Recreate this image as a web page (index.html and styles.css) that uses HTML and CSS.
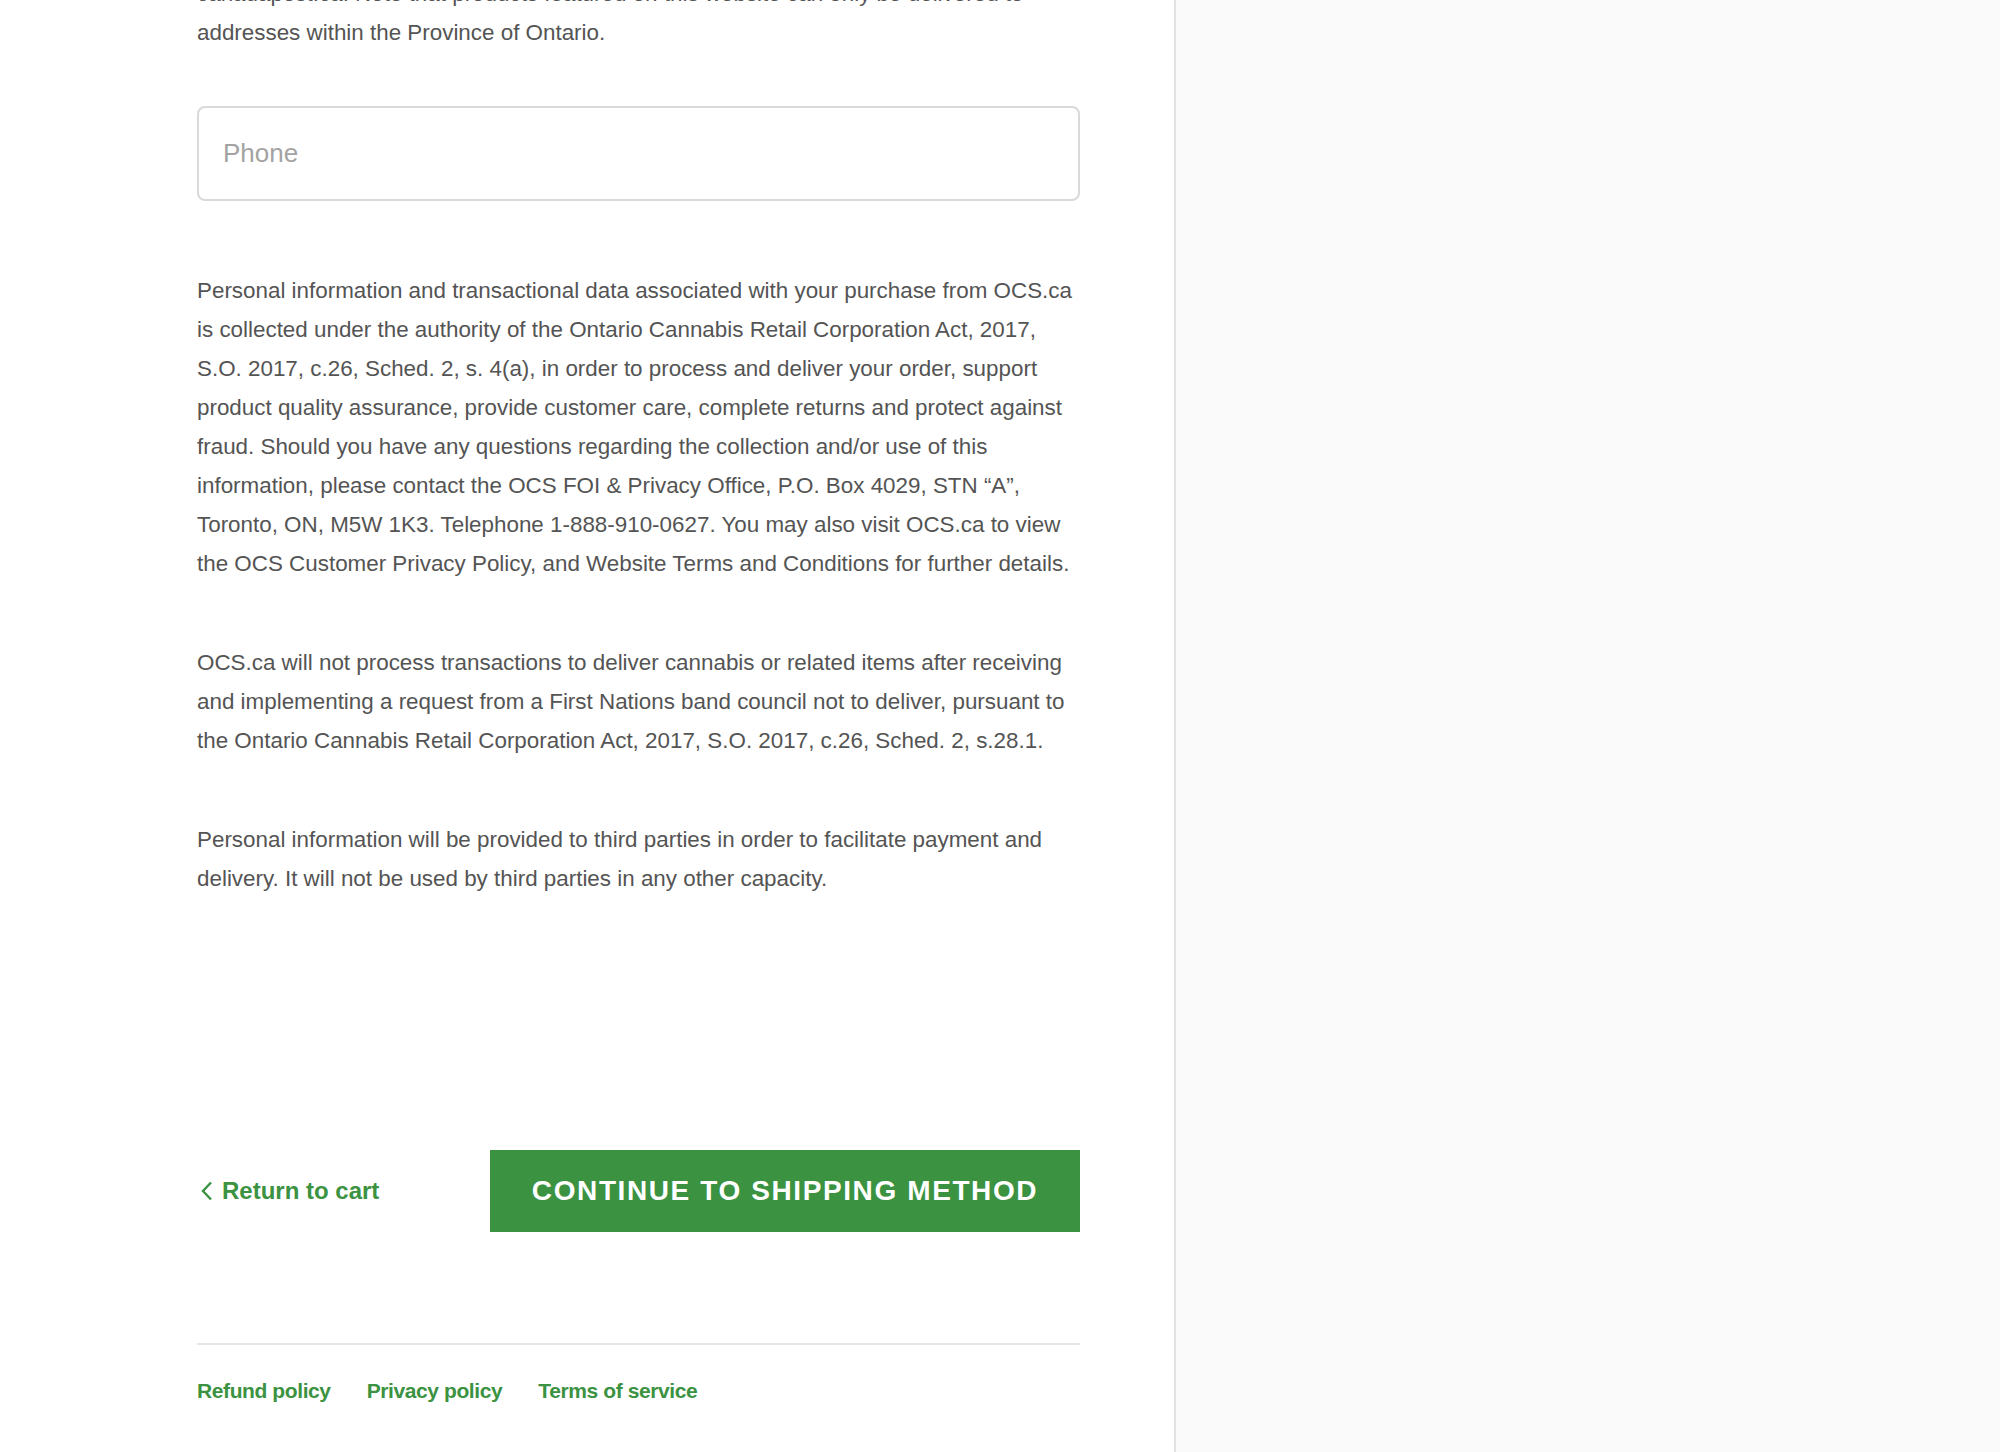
FILE: index.html
```html
<!DOCTYPE html>
<html lang="en">
<head>
<meta charset="utf-8">
<title>Checkout - Contact information</title>
<link rel="stylesheet" href="styles.css">
</head>
<body>
<div class="page">
  <main class="main">
    <div class="content">
      <p class="text intro">canadapost.ca. Note that products featured on this website can only be delivered to addresses within the Province of Ontario.</p>

      <div class="field">
        <input class="input" type="tel" placeholder="Phone">
      </div>

      <p class="text p1">Personal information and transactional data associated with your purchase from OCS.ca is collected under the authority of the Ontario Cannabis Retail Corporation Act, 2017, S.O. 2017, c.26, Sched. 2, s. 4(a), in order to process and deliver your order, support product quality assurance, provide customer care, complete returns and protect against fraud. Should you have any questions regarding the collection and/or use of this information, please contact the OCS FOI &amp; Privacy Office, P.O. Box 4029, STN “A”, Toronto, ON, M5W 1K3. Telephone 1-888-910-0627. You may also visit OCS.ca to view the OCS Customer Privacy Policy, and Website Terms and Conditions for further details.</p>

      <p class="text p2">OCS.ca will not process transactions to deliver cannabis or related items after receiving and implementing a request from a First Nations band council not to deliver, pursuant to the Ontario Cannabis Retail Corporation Act, 2017, S.O. 2017, c.26, Sched. 2, s.28.1.</p>

      <p class="text p3">Personal information will be provided to third parties in order to facilitate payment and delivery. It will not be used by third parties in any other capacity.</p>

      <div class="actions">
        <a class="back" href="#">
          <svg class="chev" width="13" height="20" viewBox="0 0 13 20" aria-hidden="true"><path d="M11 1.5 L3 10 L11 18.5" fill="none" stroke="currentColor" stroke-width="2.4"/></svg>
          <span>Return to cart</span>
        </a>
        <button class="btn" type="button">Continue to shipping method</button>
      </div>

      <footer class="footer">
        <a href="#">Refund policy</a>
        <a href="#">Privacy policy</a>
        <a href="#">Terms of service</a>
      </footer>
    </div>
  </main>
  <aside class="sidebar"></aside>
</div>
</body>
</html>
```
FILE: styles.css
```css
html, body {
  margin: 0;
  padding: 0;
  background: #fff;
}

body {
  font-family: "Liberation Sans", Arial, sans-serif;
  color: #545454;
  overflow: hidden;
  height: 1452px;
}

.page {
  display: flex;
  height: 1452px;
}

.main {
  flex: 0 0 1174px;
  box-sizing: border-box;
  padding-left: 197px;
  padding-right: 94px;
  overflow: hidden;
}

.sidebar {
  flex: 1;
  background: #fafafa;
  border-left: 2px solid #e1e1e1;
}

.content {
  margin-top: -26px;
  width: 883px;
}

.text {
  margin: 0 -4px 0 0;
  font-size: 22.4px;
  line-height: 39px;
}

.intro {
  margin-bottom: 54px;
}

.field {
  margin-bottom: 70px;
}

.input {
  display: block;
  width: 100%;
  box-sizing: border-box;
  height: 95px;
  border: 2px solid #d9d9d9;
  border-radius: 8px;
  padding: 0 24px;
  font-family: "Liberation Sans", Arial, sans-serif;
  font-size: 26px;
  color: #333;
  background: #fff;
  outline: none;
}

.input::placeholder {
  color: #a3a3a3;
}

.p1, .p2 {
  margin-bottom: 60px;
}

.actions {
  margin-top: 252px;
  display: flex;
  align-items: center;
  justify-content: space-between;
}

.back {
  display: flex;
  align-items: center;
  gap: 9px;
  margin-left: 3px;
  color: #3b9241;
  text-decoration: none;
  font-weight: bold;
  font-size: 24px;
}

.chev {
  display: block;
}

.btn {
  width: 590px;
  height: 82px;
  border: 0;
  border-radius: 0;
  background: #3b9241;
  color: #fff;
  font-family: "Liberation Sans", Arial, sans-serif;
  font-weight: bold;
  font-size: 28px;
  letter-spacing: 1.6px;
  text-transform: uppercase;
  cursor: pointer;
}

.footer {
  margin-top: 111px;
  border-top: 2px solid #e6e6e6;
  padding-top: 32px;
  display: flex;
  gap: 36px;
}

.footer a {
  color: #3b9241;
  text-decoration: none;
  font-weight: bold;
  font-size: 21px;
  line-height: 28px;
  letter-spacing: -0.4px;
}
```
